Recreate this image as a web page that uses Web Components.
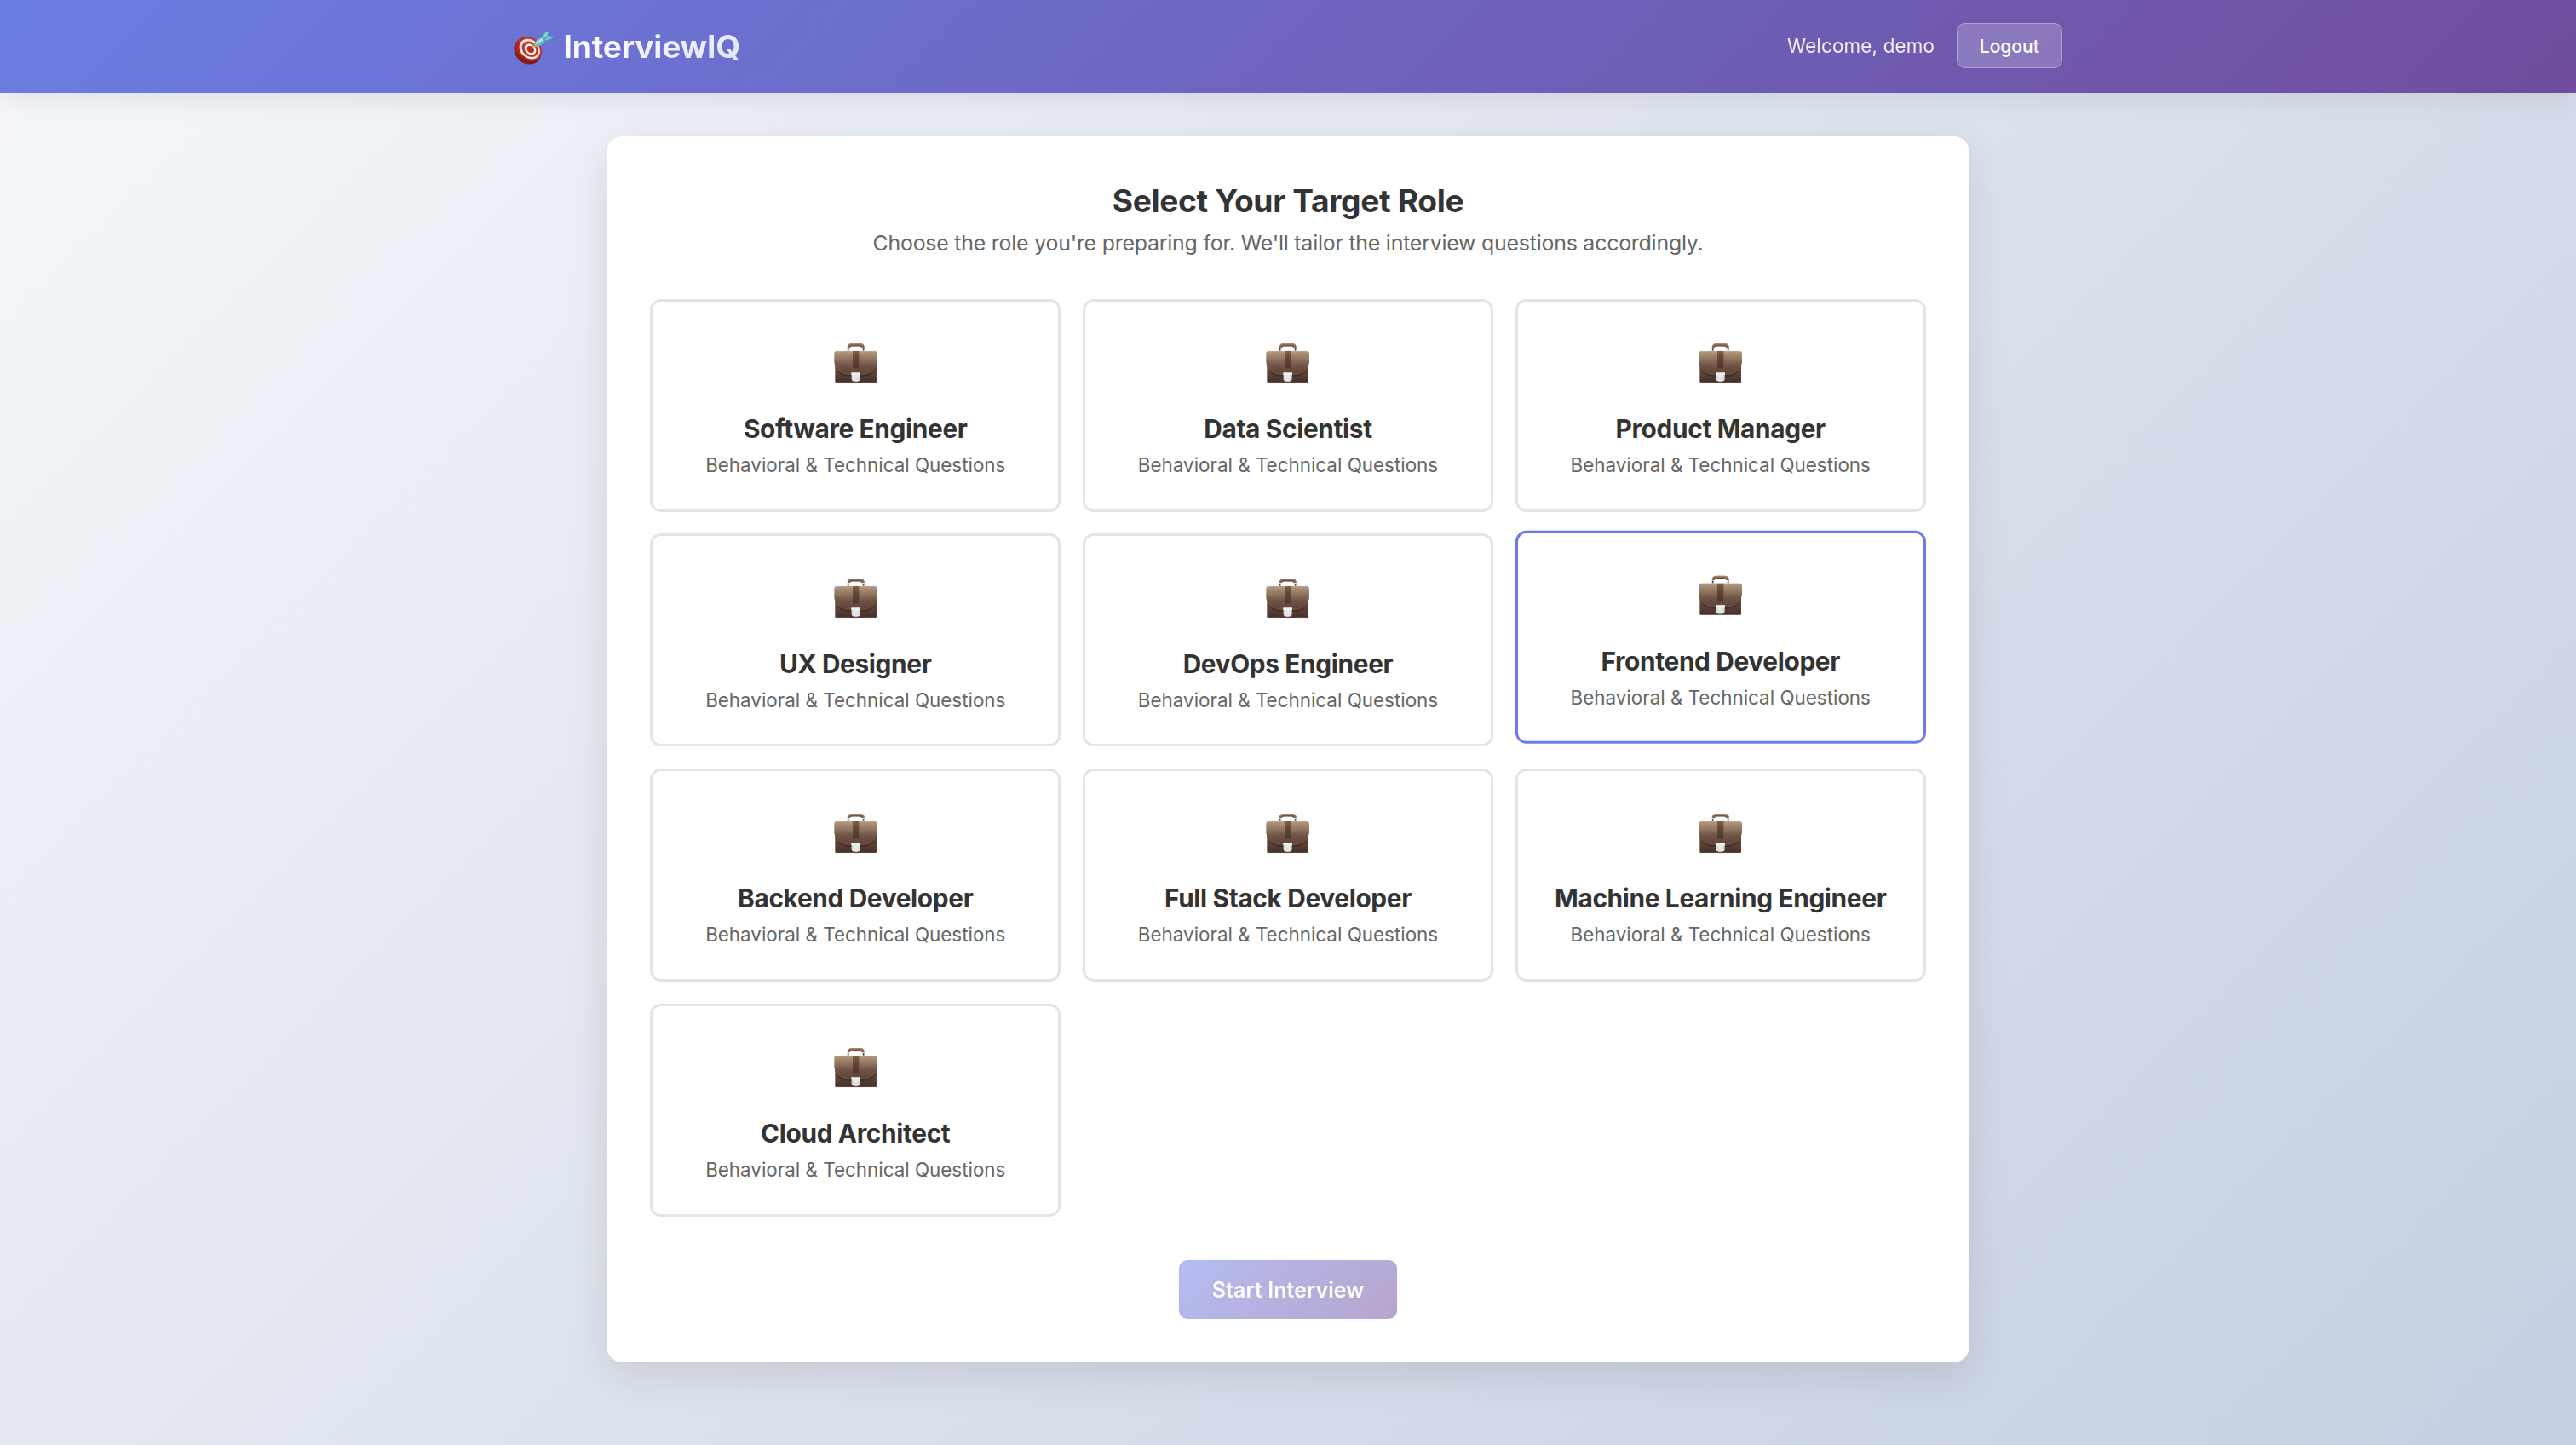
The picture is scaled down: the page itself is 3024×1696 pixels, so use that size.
<!DOCTYPE html>
<html lang="en">
<head>
<meta charset="utf-8">
<title>InterviewIQ</title>
<style>
html, body { margin: 0; height: 100%; }
body { font-family: Inter, "Liberation Sans", sans-serif; color: #333; overflow: hidden; }
</style>
</head>
<body>
<iq-app></iq-app>
<script>
const define = (name, html) => customElements.define(name, class extends HTMLElement {
  constructor() {
    super();
    const t = document.createElement('template');
    t.innerHTML = html;
    this.attachShadow({ mode: 'open' }).append(t.content.cloneNode(true));
  }
});

define('target-icon', `
<style>:host{display:block;width:48.7px;height:42px} svg{display:block;width:100%;height:100%}</style>
<svg viewBox="36 46 146 126">
  <defs>
    <linearGradient id="rim" x1="0" y1="0" x2="1" y2="1"><stop offset="0" stop-color="#b3271f"/><stop offset="1" stop-color="#6d1a14"/></linearGradient>
    <linearGradient id="red" x1="0" y1="0" x2="0" y2="1"><stop offset="0" stop-color="#cf362c"/><stop offset="1" stop-color="#ad211b"/></linearGradient>
  </defs>
  <g transform="rotate(42 88 119)"><ellipse cx="87" cy="122" rx="51" ry="44" fill="url(#rim)"/></g>
  <g transform="rotate(42 91 114)">
    <ellipse cx="90" cy="114" rx="49" ry="40" fill="url(#red)"/>
    <ellipse cx="92" cy="113" rx="39.5" ry="32" fill="#f6eeea"/>
    <ellipse cx="93" cy="112.500" rx="31" ry="25" fill="#c42c25"/>
    <ellipse cx="94" cy="112" rx="22.500" ry="18" fill="#f6eeea"/>
    <ellipse cx="95" cy="112" rx="14" ry="11" fill="#bd2822"/>
  </g>
  <path d="M95 113L108 99" stroke="#7a4a35" stroke-width="3"/>
  <path d="M103 105l7-13 12 12-13 4z" fill="#dba53a"/>
  <path d="M108 96q5-15 33-25l8 8q-7 20-29 26-12 0-12-9z" fill="#66c0c6"/>
  <path d="M112 93q9-12 29-20l4 3q-12 14-30 22z" fill="#a6e4e3"/>
  <path d="M138 76q0-16 13-26 6-1 8 4l-1 12q8 2 17 0 4 2 1 7-12 13-31 12z" fill="#4fa9b0"/>
  <path d="M140 75q2-15 12-22 4 0 4 4l-3 13zM147 81l13-12q8 2 14 1-9 11-26 12z" fill="#84d2d5"/>
</svg>`);

define('briefcase-icon', `
<style>:host{display:block;width:53.300px;height:48px} svg{display:block;width:100%;height:100%}</style>
<svg viewBox="54 36 160 144">
  <defs>
    <linearGradient id="body" x1="0" y1="0" x2="0" y2="1"><stop offset="0" stop-color="#6b5042"/><stop offset=".7" stop-color="#563e33"/><stop offset="1" stop-color="#432e26"/></linearGradient>
    <linearGradient id="flap" x1="0" y1="0" x2="0" y2="1"><stop offset="0" stop-color="#b39a80"/><stop offset=".3" stop-color="#957963"/><stop offset=".6" stop-color="#6f5445"/><stop offset="1" stop-color="#5d4439"/></linearGradient>
    <linearGradient id="strap" x1="0" y1="0" x2="0" y2="1"><stop offset="0" stop-color="#80604a"/><stop offset=".4" stop-color="#624737"/><stop offset="1" stop-color="#4d362a"/></linearGradient>
    <linearGradient id="clasp" x1="0" y1="0" x2="0" y2="1"><stop offset="0" stop-color="#fff"/><stop offset=".5" stop-color="#d6d6d8"/><stop offset="1" stop-color="#eee"/></linearGradient>
  </defs>
  <path d="M107 65V57M161 65V57" stroke="#564237" stroke-width="5"/>
  <path d="M104 55q0-16 17-16h27q17 0 17 16h-9q-1-6-9-6h-26q-8 0-9 6z" fill="#8e6a53"/>
  <path d="M112 54q1-6 10-6h25q8 0 9 6" fill="none" stroke="#46342b" stroke-width="2.500"/>
  <path d="M110 43q5-2.500 12-2.500h25q8 0 12 3" fill="none" stroke="#b58b70" stroke-width="2.500"/>
  <path d="M61 100h146v73q0 4-4 4H65q-4 0-4-4z" fill="url(#body)"/>
  <path d="M60 107q5 42 52 44h44q47-2 52-44v4q-5 43-50 45h-48q-45-2-50-45z" fill="#432f26"/>
  <path d="M58 75q0-9 9-9h134q9 0 9 9v30q-6 43-54 45h-44q-48-2-54-45z" fill="url(#flap)"/>
  <path d="M60 106q7 40 54 42h40q47-2 54-42" fill="none" stroke="#7a5c4b" stroke-width="1.500"/>
  <path d="M65 67h138" stroke="#c5ae96" stroke-width="2"/>
  <path d="M123 66h22v61h-22z" fill="url(#strap)"/>
  <path d="M119 142q2-14 15-14t15 14z" fill="#68483a"/>
  <path d="M119 143h30v20q0 10-9 10h-12q-9 0-9-10z" fill="url(#clasp)"/>
  <path d="M118 142h32v7h-32z" fill="#f2f2f3"/>
  <path d="M126 153h16v7q-8 3-16 0z" fill="#e9e9eb"/>
  <path d="M62 176h144" stroke="#806b60" stroke-width="1.500"/>
</svg>`);

define('iq-logo', `
<style>
:host{display:flex;align-items:center}
target-icon{margin:3px 10px 0 -.3px}
span{font-size:37.200px;font-weight:700;line-height:46px;letter-spacing:-.22px;padding-top:1px;color:transparent;background:linear-gradient(135deg,#fff 0%,#e0e7ff 100%);-webkit-background-clip:text;background-clip:text}
</style><target-icon></target-icon><span><slot></slot></span>`);

define('logout-button', `
<style>
button{display:flex;align-items:center;justify-content:center;box-sizing:border-box;width:124px;height:53px;margin:0;padding:2px 0 0;border:1px solid rgba(255,255,255,.3);border-radius:9.600px;background:rgba(255,255,255,.2);color:#fff;font:500 21px Inter,sans-serif}
:host{display:block;margin-top:-2px}
</style><button><slot></slot></button>`);

define('iq-header', `
<style>
:host{display:block;position:relative;height:108.800px;background:linear-gradient(135deg,#6b7de3 0%,#704d9d 100%);box-shadow:0 3.200px 32px rgba(0,0,0,.1)}
.in{box-sizing:border-box;width:1920px;height:100%;margin:0 auto;padding:0 51.200px;display:flex;align-items:center;justify-content:space-between}
.user{display:flex;align-items:center;gap:25.600px}
.w{font-size:22.400px;line-height:36px;letter-spacing:.18px;color:#fff;opacity:.9;margin-top:-1px}
</style>
<div class="in"><iq-logo>InterviewIQ</iq-logo><div class="user"><span class="w">Welcome, demo</span><logout-button>Logout</logout-button></div></div>`);

define('role-card', `
<style>
:host{box-sizing:border-box;display:flex;flex-direction:column;align-items:center;border:3px solid #e1e5e9;border-radius:12.800px;background:#fff;padding-top:48.600px}
:host([active]){border-color:#6b7de3;transform:translateY(-3.200px)}
.n{margin-top:32.600px;font-size:29.800px;line-height:40px;font-weight:650;letter-spacing:-.34px;color:#333;white-space:nowrap}
.s{margin-top:5.300px;font-size:22.400px;line-height:36px;color:#666;white-space:nowrap}
</style>
<briefcase-icon></briefcase-icon><div class="n"><slot></slot></div><div class="s">Behavioral &amp; Technical Questions</div>`);

define('start-button', `
<style>
:host{display:flex;justify-content:center;margin-top:51.600px}
button{box-sizing:border-box;width:256px;height:68.800px;margin:0;padding:1px 0 0;border:0;border-radius:9.600px;background:linear-gradient(135deg,#6b7de3 0%,#704d9d 100%);opacity:.5;color:#fff;font:600 25px Inter,sans-serif;letter-spacing:.07px}
</style><button disabled><slot></slot></button>`);

define('role-panel', `
<style>
:host{display:block;box-sizing:border-box;width:1600px;height:1438.800px;margin:51.200px auto 0;padding:51.200px;background:#fff;border-radius:19.200px;box-shadow:0 16px 48px rgba(0,0,0,.1)}
h2{margin:0;text-align:center;font-size:37.200px;line-height:49px;font-weight:680;letter-spacing:-.38px;color:#333}
p{margin:5px 0 44.600px;text-align:center;font-size:24.900px;line-height:41px;letter-spacing:-.22px;color:#666}
.grid{display:grid;grid-template-columns:repeat(3,1fr);grid-auto-rows:250px;gap:25.600px}
</style>
<h2>Select Your Target Role</h2>
<p>Choose the role you're preparing for. We'll tailor the interview questions accordingly.</p>
<div class="grid"><slot></slot></div>
<start-button>Start Interview</start-button>`);

define('iq-app', `
<style>:host{display:block;height:100vh;background:linear-gradient(135deg,#f5f7fa 0%,#c5cfe1 100%)} main{display:flow-root}</style>
<iq-header></iq-header>
<main><role-panel>
<role-card>Software Engineer</role-card>
<role-card>Data Scientist</role-card>
<role-card>Product Manager</role-card>
<role-card>UX Designer</role-card>
<role-card>DevOps Engineer</role-card>
<role-card active>Frontend Developer</role-card>
<role-card>Backend Developer</role-card>
<role-card>Full Stack Developer</role-card>
<role-card>Machine Learning Engineer</role-card>
<role-card>Cloud Architect</role-card>
</role-panel></main>`);
</script>
</body>
</html>
